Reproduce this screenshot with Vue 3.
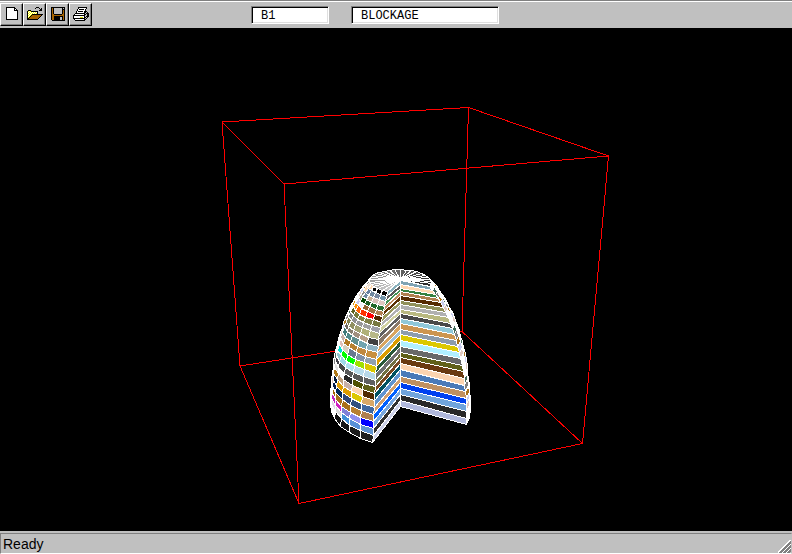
<script setup>
import { ref } from 'vue'

const blockId = ref('B1')
const blockType = ref('BLOCKAGE')

const inks = { K: '#000000', W: '#ffffff', Y: '#ffff00', D: '#a86400', G: '#c0c0c0', S: '#808080', O: '#dcdc00' }

const tools = [
  {
    name: 'New',
    rows: [
      '..KKKKKKKKK.....',
      '..KWWWWWWWKK....',
      '..KWWWWWWWKWK...',
      '..KWWWWWWWKKKK..',
      '..KWWWWWWWWWWK..',
      '..KWWWWWWWWWWK..',
      '..KWWWWWWWWWWK..',
      '..KWWWWWWWWWWK..',
      '..KWWWWWWWWWWK..',
      '..KWWWWWWWWWWK..',
      '..KWWWWWWWWWWK..',
      '..KWWWWWWWWWWK..',
      '..KKKKKKKKKKKK..'
    ]
  },
  {
    name: 'Open',
    rows: [
      '.........KKK....',
      '........K...K.K.',
      '.............KK.',
      '.KKK........KKK.',
      'KYWYKKKKKKK.....',
      'KWYWYWYWYWK.....',
      'KYWYWYWYWYK.....',
      'KWYWYKKKKKKKKKKK',
      'KYWYKDDDDDDDDDK.',
      'KWYKDDDDDDDDDK..',
      'KYKDDDDDDDDDK...',
      'KKDDDDDDDDDK....',
      'KKKKKKKKKKK.....'
    ]
  },
  {
    name: 'Save',
    rows: [
      '.KKKKKKKKKKKKKK.',
      '.KDKGGGGGGGGKGK.',
      '.KDKGGGGGGGGKKK.',
      '.KDKGGGGGGGGKDK.',
      '.KDKGGGGGGGGKDK.',
      '.KDKGGGGGGGGKDK.',
      '.KDKGGGGGGGGKDK.',
      '.KDDKKKKKKKKDDK.',
      '.KDDDDDDDDDDDDK.',
      '.KDDKKKKKKKKKDK.',
      '.KDDKKKKKKGGKDK.',
      '.KDDKKKKKKGGKDK.',
      '.KDDKKKKKKGGKDK.',
      '..KKKKKKKKKKKKK.'
    ]
  },
  {
    name: 'Print',
    rows: [
      '.....KKKKKKKKK..',
      '.....KWWWWWWWK..',
      '....KWKKKKKWK...',
      '....KWWWWWWWK...',
      '...KWKKKKKWKKK..',
      '...KWWWWWWWKKGK.',
      '..KKKKKKKKKKGKKK',
      '.KWWWWWWWWWKKGKK',
      'KKKKKKKKKKKKGGKK',
      'KWWWWWWWWWWKGKKK',
      'KWWWWWWOOOWKKGK.',
      'KKKKKKKKKKKKGK..',
      '.KWWWWWWWWWKK...',
      '..KKKKKKKKKK....'
    ]
  }
]

function pixels(rows) {
  const out = []
  rows.forEach((row, y) => {
    for (let x = 0; x < row.length; x++) {
      if (row[x] !== '.') out.push({ x, y, fill: inks[row[x]] })
    }
  })
  return out
}

const icons = tools.map((t) => ({ name: t.name, cells: pixels(t.rows) }))

// Wireframe of the domain box
const boxPath =
  'M222 94L468.5 79.5L608.5 128L284 156Z' +
  'M240 338L462 303.5L582.5 415.5L299 475.5Z' +
  'M222 94L240 338M468.5 79.5L462 303.5M608.5 128L582.5 415.5M284 156L299 475.5'

// Ring profiles of the body, in thirds of a screen unit
const axisY = [557, 568, 579, 590, 602, 615, 628, 642, 656, 671, 686, 702, 718, 736, 754, 771, 788, 806, 824, 843, 862, 880, 898, 916, 935]
const leftX = [533, 530, 527, 523, 521, 518, 515, 512, 509, 506, 504, 502, 500, 498, 497, 496, 495, 494, 493, 492, 491, 490, 489, 489, 488]
const leftY = [590, 603, 619, 633, 648, 663, 681, 698, 715, 734, 753, 773, 793, 813, 834, 855, 875, 895, 916, 937, 958, 979, 1000, 1021, 1043]
const rightX = [659, 668, 676, 684, 692, 700, 707, 714, 721, 727, 733, 738, 743, 748, 752, 756, 759, 762, 764, 766, 768, 769, 770, 770, 770]
const rightY = [573, 585, 597, 610, 623, 638, 653, 668, 684, 701, 718, 736, 754, 772, 791, 811, 830, 850, 870, 890, 910, 929, 950, 970, 988]
const AXIS_X = 571
const STEP = Math.PI / 16

function ringPoint(i, col) {
  const t = -col * STEP
  const c = Math.cos(t)
  const s = Math.sin(t)
  const depth = 1 + 0.06 * (0.9 * c + 0.44 * s)
  const ux = (leftX[i] - AXIS_X) / 1.054
  const uy = (leftY[i] - axisY[i]) / 1.054
  const vx = (rightX[i] - AXIS_X) / 1.026
  const vy = (rightY[i] - axisY[i]) / 1.026
  return [AXIS_X + (ux * c + vx * s) * depth, axisY[i] + (uy * c + vy * s) * depth]
}

const place = ([x, y]) => [Math.floor(210 + x / 3) + 0.5, Math.floor(67 + y / 3) + 0.5]
const toPoints = (list) => list.map((p) => place(p).join(',')).join(' ')

const skin = [
  ['#000000', '#000000', '#000000', '#ffd8b0', '#f0e0d0'],
  ['#7094a8', '#7888a0', '#7088a0', '#6880a0', '#ffd8b0'],
  ['#e0c8c0', '#d8c0b8', '#c8b098', '#7088a0', '#888888'],
  ['#287030', '#206828', '#1c5c20', '#004800', '#b0a890'],
  ['#b08050', '#a07040', '#906030', '#f0f0f8', '#c8c8f0'],
  ['#502800', '#ff0000', '#ff3000', '#ff6000', '#ff9000', '#d89000'],
  ['#787840', '#808048', '#808040', '#787838', '#606020'],
  ['#a0a0a8', '#a0a0a0', '#989898', '#909090', '#808080'],
  ['#b8b888', '#b0b078', '#a0a070', '#909060', '#808050'],
  ['#404040', '#b8a088', '#a09080', '#888070', '#706860'],
  ['#90b4c4', '#70a4b0', '#609090', '#508888', '#407878'],
  ['#c89040', '#c08840', '#b88030', '#b07820', '#c8b0a8'],
  ['#90a0b0', '#8090a8', '#687890', '#d8d0c0', '#e0c0b8'],
  ['#dcc800', '#a0e000', '#00ff00', '#00ff00', '#00e0d0'],
  ['#b8d8e8', '#b8dcec', '#b0e0f0', '#a0d8e8', '#90c8d0'],
  ['#606060', '#585858', '#585858', '#484848', '#404048'],
  ['#606018', '#505000', '#282828', '#ffffff', '#e0e0e0'],
  ['#502800', '#fcd4b0', '#c8b0a8', '#c0a080', '#b07818'],
  ['#d8a868', '#dcc800', '#dc9c00', '#dc9c00', '#001838'],
  ['#4068a0', '#305080', '#304878', '#002858', '#001848'],
  ['#b08050', '#b88030', '#a87018', '#a87018', '#a06000'],
  ['#0000ff', '#9090f0', '#8080d8', '#d020c0', '#c020c0'],
  ['#6094d0', '#5890d8', '#4090d8', '#d8d8d8', '#e0d8e8'],
  ['#202020', '#1c1c1c', '#181818', '#101010', '#ffffff']
]
const leftCut = [
  '#88b0bc', '#585858', '#409050', '#c08c60', '#5c3000', '#98985c', '#b0b0b4', '#d0d0a0',
  '#606060', '#887868', '#d8a460', '#a0c0d8', '#dc9c00', '#285838', '#707070', '#707040',
  '#784820', '#005060', '#6094d0', '#d0a070', '#0060ff', '#78a8e0', '#303030', '#ccd0e8'
]
const rightCut = [
  '#7fa3b3', '#ffd8b0', '#35803f', '#b07f4e', '#552a00', '#90905a', '#b0b0b0', '#b8b880',
  '#484848', '#90c8d8', '#cc9550', '#8c9cac', '#dcc800', '#b0f0ff', '#686868', '#606018',
  '#6a3a10', '#fcd4b0', '#4a7ab8', '#c09060', '#0040f0', '#70a4dc', '#282828', '#b0b8dc'
]
const rim = ['#a87018', '#ffffff', '#406858', '#c8ccf0', '#ffffff', '#808080', '#e0c8c0', '#ffffff']

const faces = []

// Outer skin, front-facing cells only
for (let col = 23; col >= 0; col--) {
  for (let i = 0; i < 24; i++) {
    const quad = [ringPoint(i, col), ringPoint(i, col + 1), ringPoint(i + 1, col + 1), ringPoint(i + 1, col)]
    const [a, b, c, d] = quad
    const area = (c[0] - a[0]) * (d[1] - b[1]) - (c[1] - a[1]) * (d[0] - b[0])
    if (area > 0) continue
    faces.push({ points: toPoints(quad), fill: skin[i][col] || rim[(i * 3 + col) % rim.length] })
  }
}

// Top cap
const hub = [AXIS_X, 554]
for (let col = 0; col < 24; col++) {
  const shade = Math.round(col < 9 ? 200 - col * 8 : Math.max(48, 130 - (col - 9) * 7))
  faces.push({
    points: toPoints([hub, ringPoint(0, col), ringPoint(0, col + 1)]),
    fill: `rgb(${shade},${shade},${shade})`
  })
}

// Two cut planes meeting at the axis
for (let i = 0; i < 24; i++) {
  faces.push({
    points: toPoints([[AXIS_X, axisY[i]], [leftX[i], leftY[i]], [leftX[i + 1], leftY[i + 1]], [AXIS_X, axisY[i + 1]]]),
    fill: leftCut[i]
  })
  faces.push({
    points: toPoints([[AXIS_X, axisY[i]], [rightX[i], rightY[i]], [rightX[i + 1], rightY[i + 1]], [AXIS_X, axisY[i + 1]]]),
    fill: rightCut[i]
  })
}
</script>

<template>
  <div class="app">
    <header class="toolbar">
      <div class="tools">
        <button v-for="icon in icons" :key="icon.name" type="button" class="tool" :aria-label="icon.name">
          <svg viewBox="0 0 16 14" width="16" height="14" shape-rendering="crispEdges" aria-hidden="true">
            <rect v-for="(p, k) in icon.cells" :key="k" :x="p.x" :y="p.y" width="1" height="1" :fill="p.fill" />
          </svg>
        </button>
      </div>
      <div class="fields">
        <input v-model="blockId" class="field field-id" type="text" aria-label="Block" />
        <input v-model="blockType" class="field field-type" type="text" aria-label="Type" />
      </div>
    </header>

    <main class="view">
      <svg class="scene" viewBox="0 0 792 503" shape-rendering="crispEdges" role="img" aria-label="Model view">
        <path class="box" :d="boxPath" />
        <polygon v-for="(f, k) in faces" :key="k" class="face" :points="f.points" :fill="f.fill" />
      </svg>
    </main>

    <footer class="status">
      <div class="pane">
        <span>Ready</span>
        <svg class="grip" viewBox="0 0 13 13" width="13" height="13" shape-rendering="crispEdges" aria-hidden="true">
          <path class="grip-light" d="M0 12.5L12.5 0M4 12.5L12.5 4M8 12.5L12.5 8" />
          <path class="grip-dark" d="M1.5 13L13 1.5M2.5 13L13 2.5M5.5 13L13 5.5M6.5 13L13 6.5M9.5 13L13 9.5M10.5 13L13 10.5" />
        </svg>
      </div>
    </footer>
  </div>
</template>

<style>
body {
  background: #000000;
}
</style>

<style scoped>
.app {
  display: flex;
  flex-direction: column;
  height: 100vh;
  box-sizing: border-box;
  font-family: "Liberation Sans", Arial, sans-serif;
  color: #000000;
}

.toolbar {
  display: flex;
  align-items: flex-start;
  gap: 159px;
  box-sizing: border-box;
  height: 28px;
  padding-top: 1px;
  background: #c0c0c0;
  border-top: 1px solid #808080;
  box-shadow: inset 0 1px 0 #ffffff;
}

.tools {
  display: flex;
  padding-top: 1px;
}

.tool {
  display: flex;
  align-items: flex-start;
  justify-content: flex-start;
  box-sizing: border-box;
  width: 23px;
  height: 23px;
  padding: 3px 0 0 3px;
  background: #c0c0c0;
  border: 1px solid;
  border-color: #ffffff #000000 #000000 #ffffff;
  border-radius: 0;
  box-shadow: inset -1px -1px 0 #808080;
}

.tool svg {
  flex: none;
}

.fields {
  display: flex;
  gap: 22px;
  padding-top: 4px;
}

.field {
  box-sizing: border-box;
  height: 18px;
  padding: 2px 0 0 9px;
  font-family: "Liberation Mono", "Courier New", monospace;
  font-size: 12px;
  line-height: 14px;
  color: #000000;
  background: #ffffff;
  border: 1px solid;
  border-color: #808080 #ffffff #ffffff #808080;
  border-radius: 0;
  outline: none;
  box-shadow: inset 1px 1px 0 #000000, inset -1px -1px 0 #dfdfdf;
}

.field-id {
  width: 78px;
}

.field-type {
  width: 148px;
}

.view {
  flex: 1;
  min-height: 0;
  background: #000000;
}

.scene {
  display: block;
  width: 100%;
  height: 100%;
}

.box {
  fill: none;
  stroke: #ff0000;
  stroke-width: 1;
}

.face {
  stroke: #ffffff;
  stroke-width: 1;
  stroke-linejoin: bevel;
}

.status {
  padding-top: 2px;
  background: #c0c0c0;
}

.pane {
  display: flex;
  align-items: center;
  justify-content: space-between;
  box-sizing: border-box;
  height: 21px;
  padding-left: 2px;
  font-size: 14px;
  line-height: 18px;
  border: 1px solid;
  border-color: #808080 #c0c0c0 #ffffff #808080;
}

.grip {
  align-self: flex-end;
}

.grip-light {
  fill: none;
  stroke: #ffffff;
}

.grip-dark {
  fill: none;
  stroke: #808080;
}
</style>
